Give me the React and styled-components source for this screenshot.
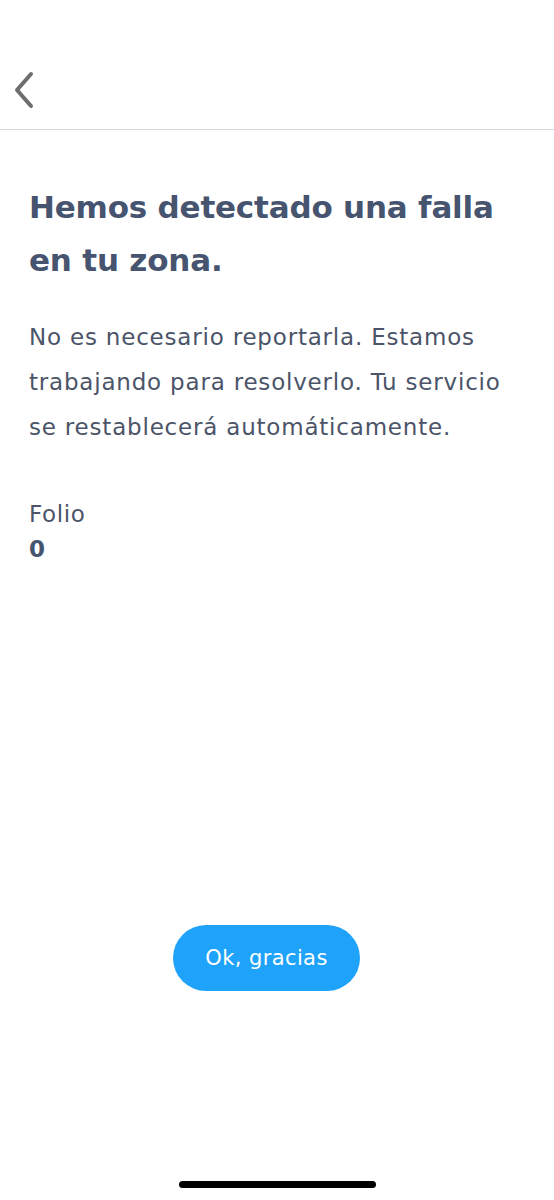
import React from "react";
import styled, { createGlobalStyle } from "styled-components";

const GlobalStyle = createGlobalStyle`
  html, body {
    margin: 0;
    padding: 0;
    background: #ffffff;
  }
  body {
    font-family: "DejaVu Sans", "Noto Sans", sans-serif;
  }
`;

const Page = styled.div`
  width: 554px;
  height: 1200px;
  display: flex;
  flex-direction: column;
  background: #ffffff;
  overflow: hidden;
`;

const Header = styled.div`
  height: 79px;
  margin-top: 50px;
  display: flex;
  align-items: center;
  padding-left: 11px;
  border-bottom: 1px solid #d9d9dc;
`;

const BackButton = styled.button`
  border: none;
  background: none;
  padding: 0;
  width: 26px;
  height: 40px;
  display: flex;
  align-items: center;
  justify-content: center;
  cursor: pointer;
`;

const Content = styled.div`
  padding: 51px 29px 0;
  color: #48536b;
`;

const Title = styled.h1`
  margin: 0;
  font-size: 31px;
  line-height: 53px;
  font-weight: 700;
  color: #465470;
  letter-spacing: -0.2px;
`;

const Body = styled.p`
  margin: 28px 0 0;
  font-size: 23px;
  line-height: 45px;
  font-weight: 400;
  color: #4b5468;
  letter-spacing: 0.8px;
  max-width: 478px;
`;

const Label = styled.div`
  margin-top: 49px;
  font-size: 23px;
  line-height: 30px;
  letter-spacing: 0.6px;
  color: #4b5468;
`;

const Value = styled.div`
  margin-top: 5px;
  font-size: 23px;
  line-height: 30px;
  font-weight: 700;
  color: #465470;
`;

const Footer = styled.div`
  flex: 1;
  display: flex;
  flex-direction: column;
  align-items: center;
  padding-top: 361px;
`;

const PrimaryButton = styled.button`
  width: 187px;
  height: 66px;
  margin-right: 21px;
  border: none;
  border-radius: 33px;
  background: #1ea2fa;
  color: #ffffff;
  font-family: "DejaVu Sans", "Noto Sans", sans-serif;
  font-size: 21px;
  letter-spacing: 0.4px;
  cursor: pointer;
`;

const HomeBar = styled.div`
  margin-top: auto;
  margin-bottom: 12px;
  width: 197px;
  height: 7px;
  border-radius: 4px;
  background: #000000;
`;

const App = () => {
  return (
    <>
      <GlobalStyle />
      <Page>
        <Header>
          <BackButton aria-label="Atrás">
            <svg width="24" height="38" viewBox="0 0 24 38" fill="none">
              <path
                d="M19 3 L5 19 L19 35"
                stroke="#6e6e70"
                strokeWidth="4"
                strokeLinecap="round"
                strokeLinejoin="round"
              />
            </svg>
          </BackButton>
        </Header>
        <Content>
          <Title>
            Hemos detectado una falla
            <br />
            en tu zona.
          </Title>
          <Body>
            No es necesario reportarla. Estamos trabajando para resolverlo. Tu
            servicio se restablecerá automáticamente.
          </Body>
          <Label>Folio</Label>
          <Value>0</Value>
        </Content>
        <Footer>
          <PrimaryButton>Ok, gracias</PrimaryButton>
          <HomeBar />
        </Footer>
      </Page>
    </>
  );
};

export default App;
